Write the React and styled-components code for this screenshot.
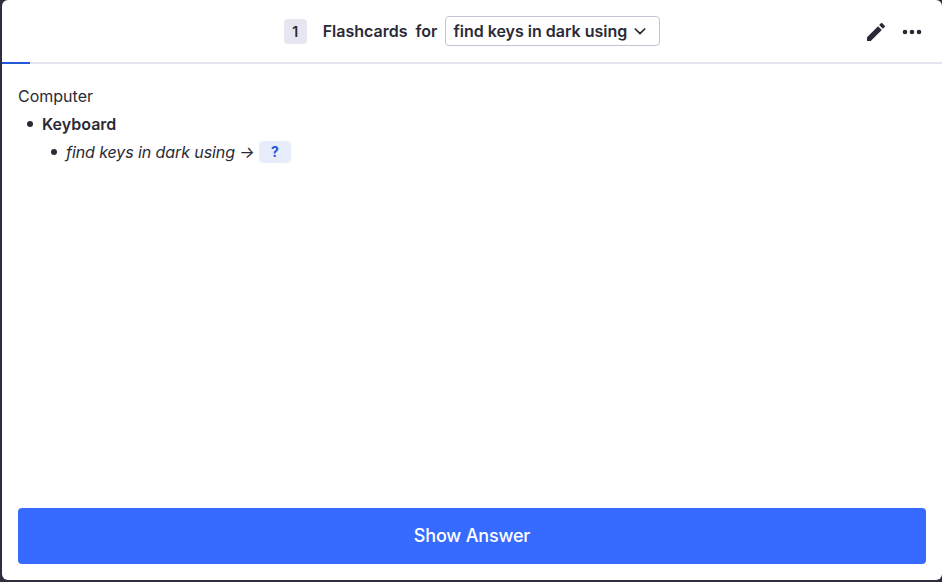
import React from "react";
import styled, { createGlobalStyle } from "styled-components";

const Global = createGlobalStyle`
  html, body { margin: 0; padding: 0; background: #2e2e3f; }
  body { font-family: Inter, "Liberation Sans", sans-serif; color: #2a2a36; }
`;

const Frame = styled.div`
  width: 942px;
  height: 582px;
  padding: 0 0 2px 2px;
  box-sizing: border-box;
  background: #2e2e3f;
  overflow: hidden;
`;

const Card = styled.div`
  height: 100%;
  background: #fff;
  border-radius: 6px;
  display: flex;
  flex-direction: column;
`;

const Header = styled.header`
  height: 62px;
  flex: none;
  display: flex;
  align-items: center;
  justify-content: center;
  position: relative;
  font-size: 16px;
  font-weight: 600;
`;

const Count = styled.span`
  width: 23px;
  height: 25px;
  border-radius: 4px;
  background: #e6e6f0;
  display: flex;
  align-items: center;
  justify-content: center;
  font-size: 14px;
  margin-right: 16px;
`;

const ForLabel = styled.span`
  margin: 0 8px;
`;

const DeckSelect = styled.div`
  width: 215px;
  height: 30px;
  box-sizing: border-box;
  border: 1px solid #c4c4d4;
  border-radius: 4px;
  display: flex;
  align-items: center;
  gap: 5px;
  padding: 0 0 0 7px;
`;

const Actions = styled.div`
  position: absolute;
  right: 20px;
  top: 20px;
  display: flex;
  align-items: center;
  gap: 14px;
`;

const ProgressTrack = styled.div`
  height: 2px;
  flex: none;
  background: #e4e4ee;
`;

const ProgressFill = styled.div`
  height: 100%;
  background: #2058d8;
`;

const Body = styled.main`
  flex: 1;
  padding: 18px 16px 0;
  font-size: 16px;
  line-height: 28px;
`;

const Root = styled.div`
  height: 28px;
  font-size: 16px;
`;

const Row = styled.div`
  display: flex;
  align-items: center;
  height: 28px;
  padding-left: ${(p) => p.$level * 24}px;
`;

const Bullet = styled.span`
  width: 6px;
  height: 6px;
  border-radius: 50%;
  background: #2a2a36;
  margin: 0 9px;
  flex: none;
`;

const Parent = styled.strong`
  font-weight: 600;
`;

const Prompt = styled.em`
  font-style: italic;
  white-space: pre;
  letter-spacing: -0.09px;
`;

const Cloze = styled.span`
  width: 32px;
  height: 22px;
  border-radius: 4px;
  background: #e8edfc;
  color: #2058d8;
  display: flex;
  align-items: center;
  justify-content: center;
  font-size: 14px;
  font-weight: 700;
`;

const Footer = styled.footer`
  padding: 0 16px 16px;
  flex: none;
`;

const AnswerButton = styled.button`
  display: block;
  width: 100%;
  height: 56px;
  padding: 0 0 2px;
  border: 0;
  border-radius: 4px;
  background: #376bff;
  color: #fff;
  font: 500 18px Inter, "Liberation Sans", sans-serif;
  letter-spacing: -0.17px;
`;

export default function App() {
  return (
    <Frame>
      <Global />
      <Card>
        <Header>
          <Count>1</Count>
          <span>Flashcards</span>
          <ForLabel>for</ForLabel>
          <DeckSelect>
            find keys in dark using
            <svg width="16" height="16" viewBox="0 0 24 24" fill="none" stroke="#2a2a36" strokeWidth="2.6" strokeLinecap="round" strokeLinejoin="round">
              <path d="M5 9l7 7 7-7" />
            </svg>
          </DeckSelect>
          <Actions>
            <svg width="24" height="24" viewBox="0 0 24 24" fill="#2a2a36">
              <path d="M3 17.25V21h3.75L17.81 9.94l-3.75-3.75L3 17.25zM20.71 7.04a1 1 0 0 0 0-1.41l-2.34-2.34a1 1 0 0 0-1.41 0l-1.83 1.83 3.75 3.75 1.83-1.83z" />
            </svg>
            <svg width="20" height="24" viewBox="0 0 20 24" fill="#2a2a36">
              <circle cx="3" cy="12" r="2.3" />
              <circle cx="10" cy="12" r="2.3" />
              <circle cx="17" cy="12" r="2.3" />
            </svg>
          </Actions>
        </Header>
        <ProgressTrack>
          <ProgressFill style={{ width: "28px" }} />
        </ProgressTrack>
        <Body>
          <Root>Computer</Root>
          <Row $level={0}>
            <Bullet />
            <Parent>Keyboard</Parent>
          </Row>
          <Row $level={1}>
            <Bullet />
            <Prompt>find keys in dark using → </Prompt>
            <Cloze>?</Cloze>
          </Row>
        </Body>
        <Footer>
          <AnswerButton>Show Answer</AnswerButton>
        </Footer>
      </Card>
    </Frame>
  );
}
